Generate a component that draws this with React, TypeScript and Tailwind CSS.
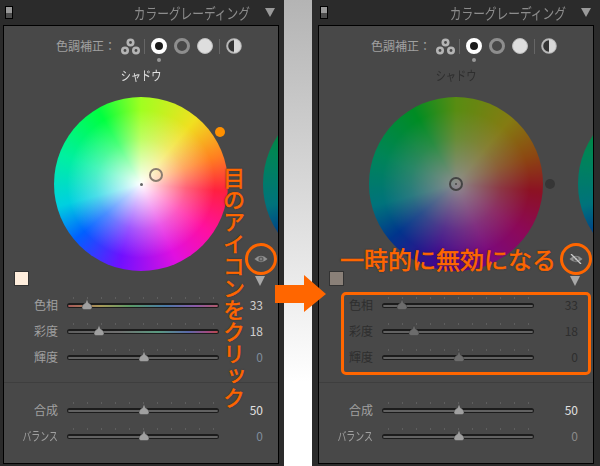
const font = { fontFamily: '"Noto Sans CJK JP", "Noto Sans", sans-serif' };

const hueTrack = 'linear-gradient(90deg,#a85a5a 0%,#a89a58 22%,#5a9a68 42%,#4a7aa8 65%,#8a5aa8 85%,#b05a6a 100%)';
const satTrack = 'linear-gradient(90deg,#5e5e5e 0%,#707070 35%,#5a9a80 60%,#5a68a8 80%,#a04a80 93%,#b84a4a 100%)';

const TICKS = [0, 1, 2, 3, 4, 5, 6, 7, 8, 9, 10];

const Slider = ({
  label,
  value,
  pos,
  track,
  labelColor,
  valueColor,
  thumbDim,
  narrow,
}: {
  label: string;
  value: string;
  pos: number;
  track?: string;
  labelColor: string;
  valueColor: string;
  thumbDim?: boolean;
  narrow?: boolean;
}) => (
  <div className="flex h-[26px] items-center">
    <div className={`w-[54px] whitespace-nowrap text-right text-[12px] leading-none ${labelColor}`}>
      {narrow ? <span className="inline-block origin-right scale-x-[.74]">{label}</span> : label}
    </div>
    <div className="relative ml-[9px] h-[5px] w-[152px] rounded-full border border-t-2 border-[#1c1c1c] bg-[#626262]" style={track ? { background: track, borderColor: '#1c1c1c' } : undefined}>
      {TICKS.map(t => (
        <div key={t} className="absolute top-[-8px] h-[2px] w-px bg-[#5e5e5e]" style={{ left: 5 + t * 14 }} />
      ))}
      <svg className="absolute top-[-6px]" style={{ left: pos - 6 }} width="12" height="11" viewBox="0 0 12 11">
        <path d="M6 0 L7.5 4 Q11 5.5 11 8.5 Q11 10.5 9 10.5 H3 Q1 10.5 1 8.5 Q1 5.5 4.5 4 Z" fill={thumbDim ? '#6c6c6c' : '#a0a0a0'} stroke="#3a3a3a" strokeWidth="0.4" />
      </svg>
    </div>
    <div className={`w-[44px] text-right text-[12px] leading-none ${valueColor}`}>{value}</div>
  </div>
);

const Toolbar = () => (
  <div className="mt-[12px] flex h-[16px] items-center">
    <div className="w-[112px] whitespace-nowrap text-right text-[12px] leading-none text-[#a0a0a0]">色調補正：</div>
    <svg className="ml-[5px]" width="19" height="17" viewBox="0 0 19 17">
      <g fill="#b4b4b4">
        <circle cx="9.5" cy="4.5" r="4" />
        <circle cx="4" cy="12.5" r="4" />
        <circle cx="15" cy="12.5" r="4" />
      </g>
      <g fill="#484848">
        <circle cx="9.5" cy="4.5" r="1.4" />
        <circle cx="4" cy="12.5" r="1.4" />
        <circle cx="15" cy="12.5" r="1.4" />
      </g>
    </svg>
    <div className="ml-[4px] h-[15px] w-px bg-[#666]" />
    <div className="relative ml-[6px] flex h-[16px] w-[16px] items-center justify-center rounded-full border-[4px] border-white bg-[#1a1a1a]">
      <div className="absolute top-[16px] h-[4px] w-[4px] rounded-full bg-[#999]" />
    </div>
    <div className="ml-[7px] h-[16px] w-[16px] rounded-full border-[3px] border-[#8e8e8e]" />
    <div className="ml-[7px] h-[16px] w-[16px] rounded-full border border-[#bbb] bg-[#dedede]" />
    <div className="ml-[6px] h-[15px] w-px bg-[#666]" />
    <svg className="ml-[6px]" width="16" height="16" viewBox="0 0 16 16">
      <circle cx="8" cy="8" r="6.8" fill="#333" stroke="#b8b8b8" strokeWidth="2" />
      <path d="M8 1.2 A6.8 6.8 0 0 1 8 14.8 Z" fill="#d8d8d8" />
    </svg>
  </div>
);

const Wheel = ({ dim, children }: { dim?: boolean; children?: React.ReactNode }) => (
  <div className="relative h-[174px] w-[174px] shrink-0">
    <div className={`h-full w-full rounded-full ${dim ? 'brightness-[.55]' : ''}`} style={{ background: 'radial-gradient(circle closest-side,#fff 0%,rgba(255,255,255,.72) 20%,rgba(255,255,255,.3) 52%,rgba(255,255,255,0) 85%),conic-gradient(from 0deg,#a0ff20 0deg,#f0e020 40deg,#ff8020 70deg,#ff2040 95deg,#ff10a0 125deg,#e010e0 155deg,#7010ff 195deg,#0060ff 230deg,#00d0e0 255deg,#00f0a0 290deg,#00ff40 330deg,#a0ff20 360deg)' }} />
    {children}
  </div>
);

const Eye = ({ off }: { off?: boolean }) => (
  <svg className="absolute left-[250px] top-[228px]" width="14" height="10" viewBox="0 0 14 10">
    <path d="M0.5 5 Q7 -1.5 13.5 5 Q7 11.5 0.5 5 Z" fill="#909090" />
    <circle cx="7" cy="5" r="2.6" fill="#5c5c5c" />
    <circle cx="7" cy="5" r="1.2" fill="#808080" />
    {off && <path d="M2 0 L12 10" stroke="#cccccc" strokeWidth="1.3" />}
  </svg>
);

const Panel = ({ off, className }: { off?: boolean; className: string }) => {
  const dimLabel = off ? 'text-[#2e2e2e]' : 'text-[#a0a0a0]';
  const dimValue = off ? 'text-[#2e2e2e]' : 'text-[#cfcfcf]';
  return (
    <div className={`flex h-[466px] shrink-0 flex-col bg-[#2b2b2b] ${className}`}>
      <div className="relative flex h-[25px] items-center">
        <div className="ml-[2px] flex h-[13px] w-[8px] flex-col border border-black">
          <div className="h-1/2 bg-[#999]" />
          <div className="h-1/2 bg-[#4c4c4c]" />
        </div>
        <div className="ml-auto origin-right scale-x-[.78] whitespace-nowrap text-[15px] leading-none text-[#8c8c8c]">カラーグレーディング</div>
        <div className="ml-[15px] mr-[9px] h-0 w-0 border-x-[5px] border-t-[9px] border-x-transparent border-t-[#9a9a9a]" />
      </div>
      <div className="relative h-[439px] w-[276px] overflow-hidden border border-black bg-[#484848]">
        <Toolbar />
        <div className={`mt-[13px] h-[16px] scale-x-[.78] text-center text-[13px] leading-[16px] ${off ? 'text-[#2e2e2e]' : 'text-[#e2e2e2]'}`}>シャドウ</div>
        <div className="mt-[14px] flex h-[174px] gap-[35px] pl-[50px]">
          <Wheel dim={off}>
            {off ? (
              <div className="absolute left-[80px] top-[80px] flex h-[14px] w-[14px] items-center justify-center rounded-full border-2 border-[#444]">
                <div className="h-[2px] w-[2px] rounded-full bg-[#444]" />
              </div>
            ) : (
              <>
                <div className="absolute left-[86px] top-[86px] h-[3px] w-[3px] rounded-full bg-[#666]" />
                <div className="absolute left-[95px] top-[71px] h-[14px] w-[14px] rounded-full border-2 border-[#8a7d70]" />
              </>
            )}
          </Wheel>
          <Wheel dim />
        </div>
        {off ? (
          <div className="absolute left-[226px] top-[153px] h-[10px] w-[10px] rounded-full bg-[#363636]" />
        ) : (
          <div className="absolute left-[211px] top-[101px] h-[10px] w-[10px] rounded-full bg-[#ff9000]" />
        )}
        <Eye off={off} />
        <div className="flex h-[15px] items-end justify-between pl-[10px] pr-[13px]">
          <div className={`h-[15px] w-[15px] border border-[#333] ${off ? 'bg-[#8a8078]' : 'bg-[#ffeedd]'}`} />
          <div className="h-0 w-0 border-x-[5px] border-t-[10px] border-x-transparent border-t-[#a8a8a8]" />
        </div>
        <div className="mt-[6px]">
          <Slider label="色相" value="33" pos={19} track={off ? undefined : hueTrack} labelColor={dimLabel} valueColor={dimValue} thumbDim={off} />
          <Slider label="彩度" value="18" pos={31} track={off ? undefined : satTrack} labelColor={dimLabel} valueColor={dimValue} thumbDim={off} />
          <Slider label="輝度" value="0" pos={76} labelColor={dimLabel} valueColor={off ? 'text-[#2e2e2e]' : 'text-[#7f8c9c]'} thumbDim={off} />
        </div>
        <div className="mt-[12px] h-px bg-[#3e3e3e]" />
        <div className="mt-[14px]">
          <Slider label="合成" value="50" pos={76} labelColor="text-[#a0a0a0]" valueColor="text-[#e0e0e0]" />
          <Slider label="バランス" value="0" pos={76} narrow labelColor="text-[#a0a0a0]" valueColor={off ? 'text-[#8a8a8a]' : 'text-[#7f8c9c]'} />
        </div>
      </div>
    </div>
  );
};

export default function App() {
  return (
    <div className="relative flex h-[466px] w-[600px] overflow-hidden bg-white" style={font}>
      <Panel className="w-[284px] pl-[3px]" />
      <div className="w-[28px] bg-gradient-to-b from-[#b4b4b4] to-white to-[82%]" />
      <Panel off className="w-[288px] pl-[6px]" />

      {/* annotations */}
      <div className="absolute left-[222px] top-[167px] text-[22px] leading-[24px] text-[#ff6600] [-webkit-text-stroke:0.6px_#ff6600] [text-shadow:0_0_2px_#222] [writing-mode:vertical-rl]">目のアイコンをクリック</div>
      <div className="absolute left-[245px] top-[243px] h-[32px] w-[32px] rounded-full border-[3px] border-[#ff6600]" />
      <div className="absolute left-[340px] top-[244px] whitespace-nowrap text-[24px] leading-[30px] text-[#ff6600] [-webkit-text-stroke:0.6px_#ff6600] [text-shadow:0_0_2px_#222]">一時的に無効になる</div>
      <div className="absolute left-[560px] top-[243px] h-[32px] w-[32px] rounded-full border-[3px] border-[#ff6600]" />
      <div className="absolute left-[341px] top-[292px] h-[83px] w-[250px] rounded-[5px] border-[3px] border-[#ff6600]" />
      <svg className="absolute left-[275px] top-[275px]" width="52" height="38" viewBox="0 0 52 38">
        <path d="M0 10 H29 V0 L51 19 L29 37 V28 H0 Z" fill="#ff6600" />
      </svg>
    </div>
  );
}
